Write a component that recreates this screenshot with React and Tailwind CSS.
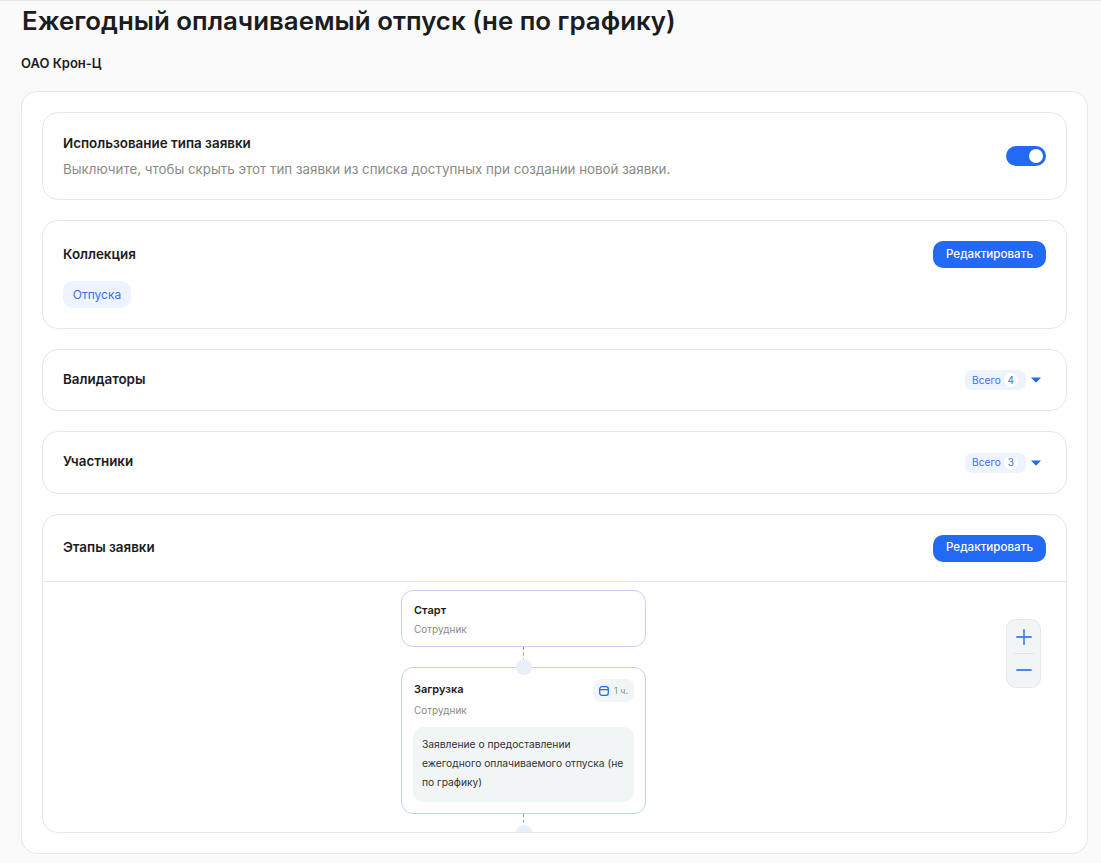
import { Plus, Minus } from 'lucide-react'

function Card({ children, className = '' }) {
  return <div className={`rounded-[16px] border border-[#e5e7eb] bg-white ${className}`}>{children}</div>
}

function EditButton() {
  return (
    <button className="flex h-[27px] w-[113px] items-center justify-center rounded-[10px] bg-[#2269f5] text-[11.6px] font-medium text-white">
      Редактировать
    </button>
  )
}

function CountRow({ title, count, height }) {
  return (
    <Card className={`mb-5 flex items-center justify-between pl-5 pr-[25px] ${height}`}>
      <div className="pb-[2px] text-[13.4px] font-semibold text-[#1c1c1e]">{title}</div>
      <div className="flex items-center gap-[5px]">
        <div className="flex h-5 w-[61px] items-center rounded-[7px] bg-[#edf3ff] pl-[7px] text-[10px] tracking-[0.1px] text-[#3d6ff0]">
          Всего
          <span className="ml-[3px] flex h-[14px] w-[14px] items-center justify-center rounded-full bg-white text-[#3d6ff0]">{count}</span>
        </div>
        <svg width="10" height="6" viewBox="0 0 10 6">
          <path d="M0 0.5H10L5 5.8Z" fill="#2269f5" />
        </svg>
      </div>
    </Card>
  )
}

function Connector() {
  return <div className="mx-auto h-5 w-0 border-l border-dashed border-[#7f9bd0]" />
}

function Dot() {
  return <div className="absolute left-1/2 top-[-9px] h-4 w-4 -translate-x-1/2 rounded-full bg-[#e9effb]" />
}

export default function App() {
  return (
    <div className="h-[863px] overflow-hidden border-t border-[#e3e5ea] bg-[#fafafa] pl-[21px] pr-[13px] font-['Inter',sans-serif] text-[#1c1c1e]">
      <h1 className="mt-[3px] pl-px text-[25.85px] font-semibold leading-[34px]">Ежегодный оплачиваемый отпуск (не по графику)</h1>
      <div className="mt-[16px] text-[13px] font-semibold leading-[18px]">ОАО Крон-Ц</div>

      <Card className="mt-[19px] h-[763px] p-5">
        <Card className="mb-5 flex h-[88px] items-center justify-between pl-5 pr-5">
          <div>
            <div className="text-[13.4px] font-semibold leading-[18px]">Использование типа заявки</div>
            <div className="mt-[8px] text-[13.35px] leading-[18px] text-[#8b8b86]">
              Выключите, чтобы скрыть этот тип заявки из списка доступных при создании новой заявки.
            </div>
          </div>
          <div className="flex h-5 w-10 items-center justify-end rounded-full bg-[#2269f5] pr-[3px]">
            <div className="h-[14px] w-[14px] rounded-full bg-white" />
          </div>
        </Card>

        <Card className="mb-5 h-[109px] px-5 pt-5">
          <div className="flex items-center justify-between">
            <div className="text-[13.4px] font-semibold">Коллекция</div>
            <EditButton />
          </div>
          <div className="mt-[13px] flex h-[27px] w-[68px] items-center justify-center rounded-[10px] bg-[#edf3ff] text-[12px] text-[#3d6ff0]">
            Отпуска
          </div>
        </Card>

        <CountRow title="Валидаторы" count="4" height="h-[62px]" />
        <CountRow title="Участники" count="3" height="h-[63px]" />

        <Card className="relative h-[319px] overflow-hidden">
          <div className="flex h-[67px] items-center justify-between border-b border-[#e5e7eb] px-5">
            <div className="pb-[2px] text-[13.4px] font-semibold">Этапы заявки</div>
            <EditButton />
          </div>

          <div className="ml-[358px] mt-[8px] w-[245px]">
            <div className="h-[57px] rounded-[12px] border border-[#bfd2f7] bg-white px-3 pt-[11px]">
              <div className="text-[11px] font-semibold leading-4">Старт</div>
              <div className="mt-[3px] text-[10px] leading-4 text-[#8b8b86]">Сотрудник</div>
            </div>
            <Connector />
            <div className="relative h-[147px] rounded-[12px] border border-[#bfd2f7] bg-white px-[11px] pt-[11px]">
              <Dot />
              <div className="flex items-start justify-between">
                <div className="pl-px pt-[2px] text-[11px] font-semibold leading-4">Загрузка</div>
                <div className="flex h-[23px] w-[41px] items-center justify-center gap-[5px] rounded-[8px] bg-[#f2f5f6] text-[9px] text-[#8b8b86]">
                  <svg width="10" height="10" viewBox="0 0 10 10" fill="none" stroke="#2269f5" strokeWidth="1.3">
                    <rect x="0.7" y="0.7" width="8.6" height="8.6" rx="2.2" />
                    <path d="M0.7 3.6H9.3" />
                  </svg>
                  1 ч.
                </div>
              </div>
              <div className="pl-px text-[10px] leading-4 text-[#8b8b86]">Сотрудник</div>
              <div className="mt-[9px] h-[75px] rounded-[10px] bg-[#f2f5f6] px-[9px] pt-[8px] text-[10.25px] leading-[19px] text-[#2f2f33]">
                Заявление о предоставлении ежегодного оплачиваемого отпуска (не по графику)
              </div>
            </div>
            <Connector />
            <div className="relative h-4">
              <Dot />
            </div>
          </div>

          <div className="absolute left-[963px] top-[104px] flex h-[69px] w-[35px] flex-col items-center rounded-[10px] border border-[#e5e7eb] bg-[#f2f5f6] text-[#4a84fa]">
            <div className="flex h-[33px] w-full items-center justify-center">
              <Plus size={24} strokeWidth={1.8} />
            </div>
            <div className="h-px w-5 bg-[#e0e2e6]" />
            <div className="flex h-[32px] w-full items-center justify-center">
              <Minus size={24} strokeWidth={1.8} />
            </div>
          </div>
        </Card>
      </Card>
    </div>
  )
}
